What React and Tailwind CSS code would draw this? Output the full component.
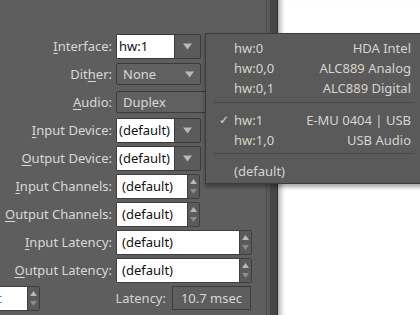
import React from 'react';

const Down = ({ c = '#b9b9b9' }) => (
  <svg width="9" height="7" viewBox="0 0 9 7"><path d="M0 0.5h9L4.5 6.5z" fill={c} /></svg>
);
const Up = ({ c = '#b9b9b9' }) => (
  <svg width="7" height="5" viewBox="0 0 7 5"><path d="M3.5 0L7 5H0z" fill={c} /></svg>
);
const SmallDown = ({ c = '#8c8c8c' }) => (
  <svg width="7" height="5" viewBox="0 0 7 5"><path d="M0 0h7L3.5 5z" fill={c} /></svg>
);

const Label = ({ pre, u, post }) => (
  <div className="text-right text-[#d8d8d8] whitespace-nowrap">
    {pre}<u className="underline-offset-2">{u}</u>{post}
  </div>
);

// editable combobox: white field + arrow button
const EditCombo = ({ value }) => (
  <div className="flex h-[25px] w-[85px] rounded-[2px] border border-[#3a3a3a] bg-[#5b5b5b]">
    <div className="flex-1 bg-white text-[#111] pl-[2px] flex items-center">{value}</div>
    <div className="w-[26px] border-l border-[#3a3a3a] flex items-center justify-center"><Down /></div>
  </div>
);

const Combo = ({ value, w = 'w-[85px]', arrow = true }) => (
  <div className={`flex items-center justify-between h-[22px] ${w} rounded-[2px] border border-[#3a3a3a] bg-[#606060] px-[6px] text-[#d8d8d8]`}>
    <span>{value}</span>
    {arrow && <Down />}
  </div>
);

const Spin = ({ value, w }) => (
  <div className={`flex h-[25px] ${w} rounded-[2px] border border-[#3f3f3f] bg-[#5b5b5b]`}>
    <div className="flex-1 bg-white text-[#111] pl-[5px] flex items-center">{value}</div>
    <div className="w-[12px] border-l border-[#3f3f3f] flex flex-col items-center justify-between py-[4px]">
      <Up />
      <SmallDown />
    </div>
  </div>
);

const rows = [
  [{ pre: '', u: 'I', post: 'nterface:' }, <EditCombo value="hw:1" />],
  [{ pre: 'Dit', u: 'h', post: 'er:' }, <Combo value="None" />],
  [{ pre: '', u: 'A', post: 'udio:' }, <Combo value="Duplex" w="w-[110px]" arrow={false} />],
  [{ pre: '', u: 'I', post: 'nput Device:' }, <EditCombo value="(default)" />],
  [{ pre: '', u: 'O', post: 'utput Device:' }, <EditCombo value="(default)" />],
  [{ pre: '', u: 'I', post: 'nput Channels:' }, <Spin value="(default)" w="w-[84px]" />],
  [{ pre: '', u: 'O', post: 'utput Channels:' }, <Spin value="(default)" w="w-[84px]" />],
  [{ pre: '', u: 'I', post: 'nput Latency:' }, <Spin value="(default)" w="w-[136px]" />],
  [{ pre: '', u: 'O', post: 'utput Latency:' }, <Spin value="(default)" w="w-[136px]" />],
];

const menuItems = [
  ['hw:0', 'HDA Intel'],
  ['hw:0,0', 'ALC889 Analog'],
  ['hw:0,1', 'ALC889 Digital'],
];

const MenuItem = ({ left, right, checked }) => (
  <div className="relative flex h-[20px] items-center justify-between pl-[28px] pr-[18px] text-[#d6d3d0]">
    {checked && <span className="absolute left-[13px] text-[12px]">✓</span>}
    <span>{left}</span>
    <span>{right}</span>
  </div>
);

const App = () => {
  return (
    <div className="relative flex h-[315px] w-[420px] overflow-hidden bg-[#5e5e5e] font-['Noto_Sans',sans-serif] text-[13px] leading-none">
      {/* form */}
      <div className="w-[266px] shrink-0 pt-[32px] flex flex-col">
        {rows.map(([lab, ctl], i) => (
          <div key={i} className="grid h-[28px] grid-cols-[112px_1fr] gap-x-[4px] items-center">
            <Label {...lab} />
            <div>{ctl}</div>
          </div>
        ))}
        <div className="flex h-[28px] items-center w-[251px]">
          <div className="flex h-[25px] w-[41px] rounded-[2px] border border-[#3f3f3f] bg-[#5b5b5b] -ml-[1px]">
            <div className="flex-1 bg-white overflow-hidden flex items-center">
              <span className="-ml-[3px] text-[#2f7fd6]">t</span>
            </div>
            <div className="w-[12px] border-l border-[#3f3f3f] flex flex-col items-center justify-between py-[4px]">
              <Up />
              <SmallDown />
            </div>
          </div>
          <div className="flex-1 text-right pr-[6px] text-[#d4d4d4]">Latency:</div>
          <div className="flex h-[24px] w-[79px] items-center justify-center border border-[#3c3c3c] text-[#d8d8d8]">10.7 msec</div>
        </div>
      </div>

      <div className="w-px bg-[#4f4f4f]" />
      <div className="w-[3px] bg-[#5a5a5a]" />
      <div className="w-[7px] bg-[#474747]" />
      <div className="w-px bg-[#2b2b2b]" />
      <div className="flex-1 bg-white shadow-[inset_7px_0_5px_-4px_rgba(0,0,0,0.3)]" />

      {/* popup menu */}
      <div className="absolute left-[205px] top-[33px] w-[225px] h-[151px] border border-[#3c3c3c] bg-[#5a5a5a] pt-[4px] shadow-[0_3px_4px_rgba(0,0,0,0.35)]">
        {menuItems.map(([l, r]) => (
          <MenuItem key={l} left={l} right={r} />
        ))}
        <div className="mx-[8px] mt-[4px] mb-[7px] h-px bg-[#474747] w-[199px]" />
        <MenuItem left="hw:1" right="E-MU 0404 | USB" checked />
        <MenuItem left="hw:1,0" right="USB Audio" />
        <div className="mx-[8px] mt-[3px] mb-[7px] h-px bg-[#474747] w-[199px]" />
        <MenuItem left="(default)" right="" />
      </div>
    </div>
  );
};

export default App;
